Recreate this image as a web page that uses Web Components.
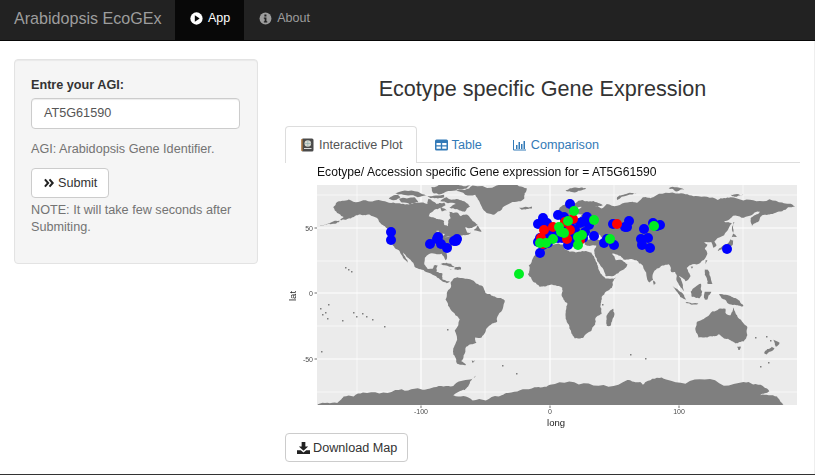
<!DOCTYPE html>
<html>
<head>
<meta charset="utf-8">
<title>Arabidopsis EcoGEx</title>
<style>
  html, body { margin: 0; padding: 0; background: #fff; }
  body { font: 12.650px/20px "Liberation Sans", Arial, sans-serif; color: #333; overflow: hidden; }
</style>
</head>
<body>

<app-navbar brand="Arabidopsis EcoGEx">
  <nav-link active label="App">
    <svg viewBox="0 0 14 14" width="13" height="13"><circle cx="7" cy="7" r="6.6" fill="#fff"/><path d="M5.2 3.6 10.4 7 5.2 10.4Z" fill="#080808"/></svg>
  </nav-link>
  <nav-link label="About">
    <svg viewBox="0 0 14 14" width="13" height="13"><circle cx="7" cy="7" r="6.4" fill="#9d9d9d"/><path d="M5.8 2.8h2.2v2H5.800ZM5.200 6h2.800v4h.9v1.300H5.200V10h.9V7.300h-.9Z" fill="#222"/></svg>
  </nav-link>
</app-navbar>

<app-layout>
  <side-panel slot="side"></side-panel>
  <main-panel slot="main"></main-panel>
</app-layout>

<app-footer></app-footer>

<script>
class AppNavbar extends HTMLElement {
  constructor() {
    super();
    this.attachShadow({ mode: 'open' });
    this.shadowRoot.innerHTML = `
      <style>
        :host { display: flex; height: 40px; background: #222; border-bottom: 1px solid #080808; }
        .brand { width: 148px; padding: 0 13px 0 14px; font-size: 16.100px; line-height: 37px; color: #9d9d9d; white-space: nowrap; }
        .links { display: flex; }
      </style>
      <div class="brand">${this.getAttribute('brand')}</div>
      <div class="links"><slot></slot></div>`;
  }
}
customElements.define('app-navbar', AppNavbar);

class NavLink extends HTMLElement {
  constructor() {
    super();
    this.attachShadow({ mode: 'open' });
    this.shadowRoot.innerHTML = `
      <style>
        :host { display: flex; align-items: center; gap: 5px; height: 36px; padding: 0 15px 4px; color: #9d9d9d; font-size: 12.500px; }
        :host([active]) { background: #080808; color: #fff; padding-right: 14px; }
        ::slotted(svg) { display: block; }
      </style>
      <slot></slot><span>${this.getAttribute('label')}</span>`;
  }
}
customElements.define('nav-link', NavLink);

class AppLayout extends HTMLElement {
  constructor() {
    super();
    this.attachShadow({ mode: 'open' });
    this.shadowRoot.innerHTML = `
      <style>
        :host { display: grid; grid-template-columns: 244px 515px; column-gap: 27px; height: 433px; padding-left: 14px; box-sizing: border-box; border-right: 1px solid #eee; }
        .side { padding-top: 18px; }
      </style>
      <div class="side"><slot name="side"></slot></div>
      <div><slot name="main"></slot></div>`;
  }
}
customElements.define('app-layout', AppLayout);

class SidePanel extends HTMLElement {
  constructor() {
    super();
    this.attachShadow({ mode: 'open' });
    this.shadowRoot.innerHTML = `
      <style>
        :host { display: block; height: 205px; box-sizing: border-box; padding: 15px 17px 15px 16px; background: #f5f5f5; border: 1px solid #e3e3e3; border-radius: 4px; box-shadow: inset 0 1px 1px rgba(0,0,0,.05); }
        label { display: block; font-weight: bold; line-height: 20px; margin-bottom: 3px; }
        .input { box-sizing: border-box; height: 31px; padding: 0 12px; line-height: 29px; background: #fff; border: 1px solid #ccc; border-radius: 4px; color: #555; box-shadow: inset 0 1px 1px rgba(0,0,0,.075); }
        .help { color: #737373; line-height: 17px; }
        .help.top { margin: 12px 0 10px; line-height: 17px; }
        .help.note { margin-top: 4px; }
      </style>
      <label>Entre your AGI:</label>
      <div class="input">AT5G61590</div>
      <div class="help top">AGI: Arabidopsis Gene Identifier.</div>
      <app-button label="Submit">
        <svg viewBox="0 0 12 10" width="11" height="10"><path d="M1 1l3.500 4L1 9M6 1l3.500 4L6 9" fill="none" stroke="#222" stroke-width="2.200"/></svg>
      </app-button>
      <div class="help note">NOTE: It will take few seconds after Submiting.</div>`;
  }
}
customElements.define('side-panel', SidePanel);

class AppButton extends HTMLElement {
  constructor() {
    super();
    this.attachShadow({ mode: 'open' });
    this.shadowRoot.innerHTML = `
      <style>
        :host { display: inline-flex; align-items: center; gap: 3px; box-sizing: border-box; height: 30px; padding: 0 11px 0 12px; background: #fff; border: 1px solid #ccc; border-radius: 4px; color: #333; }
        ::slotted(svg) { display: block; }
      </style>
      <slot></slot><span>${this.getAttribute('label')}</span>`;
  }
}
customElements.define('app-button', AppButton);

class MainPanel extends HTMLElement {
  constructor() {
    super();
    this.attachShadow({ mode: 'open' });
    this.shadowRoot.innerHTML = `
      <style>
        :host { display: block; }
        h2 { margin: 0; padding-top: 34px; height: 51px; font-size: 21.600px; line-height: 28px; font-weight: 500; text-align: center; color: #333; }
        app-button { height: 29px; padding: 0 10px 0 11px; }
      </style>
      <h2>Ecotype specific Gene Expression</h2>
      <tab-bar></tab-bar>
      <map-plot></map-plot>
      <app-button label="Download Map">
        <svg viewBox="0 0 14 14" width="13" height="13"><path d="M5 1h4v5h3L7 10.500 2 6h3Z" fill="#222"/><path d="M0 10h4l3 2.500L10 10h4v4H0Z" fill="#222"/></svg>
      </app-button>`;
  }
}
customElements.define('main-panel', MainPanel);

class TabBar extends HTMLElement {
  constructor() {
    super();
    this.attachShadow({ mode: 'open' });
    this.shadowRoot.innerHTML = `
      <style>
        :host { display: flex; gap: 2px; height: 37px; box-sizing: border-box; border-bottom: 1px solid #ddd; }
        .tab { display: flex; align-items: center; gap: 5px; box-sizing: border-box; height: 37px; padding: 0 12px 1px 15px; color: #337ab7; border: 1px solid transparent; border-bottom: 0; }
        .tab.active { color: #555; background: #fff; border-color: #ddd; border-radius: 4px 4px 0 0; padding-right: 13px; }
        .tab.narrow { gap: 4px; }
        svg { display: block; }
      </style>
      <div class="tab active">
        <svg viewBox="0 0 13 14" width="13" height="14"><rect x="0.500" y="0.500" width="12" height="13" rx="1.500" fill="#4a4a4a"/><path d="M1 1v12" stroke="#c8843c" stroke-width="1.200"/><circle cx="6.800" cy="5.500" r="3.300" fill="#d8d8d0"/><path d="M3.500 5.500h6.600M6.800 2.200v6.600" stroke="#8aa" stroke-width=".6"/><path d="M3 10.500h7.500" stroke="#ddd"/></svg>
        <span>Interactive Plot</span>
      </div>
      <div class="tab narrow">
        <svg viewBox="0 0 13 12" width="13" height="12"><rect width="13" height="11" y="0.500" rx="1.500" fill="#337ab7"/><path d="M1.500 4h4.300v2.300H1.500ZM7.200 4h4.300v2.300H7.200ZM1.500 7.500h4.300v2.300H1.500ZM7.200 7.500h4.300v2.300H7.200Z" fill="#fff"/></svg>
        <span>Table</span>
      </div>
      <div class="tab">
        <svg viewBox="0 0 13 12" width="13" height="12"><path d="M.5 1v10H13" fill="none" stroke="#337ab7"/><path d="M3 6h1.500v4H3ZM5.500 3h1.500v7H5.500ZM8 5h1.500v5H8ZM10.500 2H12v8h-1.500Z" fill="#337ab7"/></svg>
        <span>Comparison</span>
      </div>`;
  }
}
customElements.define('tab-bar', TabBar);

// continents as lon,lat outlines, the svg scales them onto the plot panel
const LAND = [
  // north america
  [-168,65.5,-166,68.5,-161,70.5,-156,71.3,-141,70,-128,70,-115,68,-108,68,-95,68,-94,72,-88,68,-82,69,-81,67,-87,64,-93,61,-94,58.5,-88,56.5,-82,55,-82,52,-79,51,-79,55,-77,57,-78,62,-72,61.5,-69,58.5,-65,60,-60,55,-56,52,-60,50,-66,50,-65,48,-64,46,-61,46,-66,44,-70,43.5,-70,42,-74,40.5,-76,38,-76,35,-81,31.5,-80,26,-81,25,-82.5,28,-84,30,-89,30,-94,29.5,-97,27,-97.5,22,-95,18.5,-91,18.5,-90,21,-87,21,-88,16,-83.5,15,-83.5,10.5,-80,9,-77.5,8.5,-80,7.5,-83,8.500,-86,11,-91,14,-96,16,-105,20,-106,23,-112,29,-114,31,-112,27,-110,23,-112,25,-115,29,-117,32.5,-120.5,34.5,-124,40,-124,48,-128,51,-133,56,-140,60,-148,60,-152,58,-158,56,-165,54.5,-160,58,-165,61],
  // aleutians
  [-178,51.500,-170,52.500,-163,54.500,-164,55,-171,53,-178,52],
  // arctic islands
  [-80,73,-70,71,-62,66,-66,62,-72,64,-78,65,-73,68,-85,70],
  [-117,72,-105,73,-102,69,-115,69],
  [-90,76,-75,78,-62,82,-75,83,-92,81],
  [-125,72,-118,75,-116,73,-120,71],
  [-120,76,-100,76,-95,74,-110,74.500],
  [-95,74,-82,75,-82,73,-92,72.500],
  [-59,48,-53,47,-56,51.5],
  [-84,62.500,-80,63,-81,64,-85,65],
  // greenland, iceland
  [-73,78,-60,82,-30,83.5,-18,80,-20,72,-32,68,-43,60,-50,62,-54,68,-58,75],
  [-24,65,-14,66,-14,64.5,-22,63.5],
  // caribbean
  [-85,22,-80,23,-74,20,-78,20],
  [-74,19.5,-69,19.5,-69,18,-74,18],
  [-78,18.500,-76,18.200,-77,17.800],
  // south america
  [-77,8,-72,12,-62,10.5,-52,5,-50,0,-44,-2.5,-35,-6,-39,-15,-41,-22,-48,-26,-53,-34,-58,-34,-57,-38,-65,-41,-66,-46,-69,-52,-65,-55,-72,-54,-75,-47,-73,-38,-70,-20,-76,-14,-81,-5,-80,0,-77,4],
  [-61,-51.500,-58,-51.500,-59,-52.500],
  // africa
  [-6,35.5,3,37,10,37,11,33.5,20,31,25,32,32,31,34,28,37,21,39,15,43,11,51,12,48,4,40,-3,39,-10,40,-16,35,-20,35,-24,32,-29,26,-34,19,-34.5,15,-27,12,-17,13.5,-8,9,-1,9.5,4,4,6,-4,5,-8,4.5,-13,8.5,-17,14,-16.5,21,-13,27,-9.5,31],
  [49,-12,50,-16,47,-25,44,-25,44,-17],
  // eurasia
  [-9,37,-9,43,-2,43.5,-1,46,-4.5,48,2,51,8,54,8,57,11,55,14,54,21,55,24,59,30,60,22,60,21,64,25,66,22,65.5,17,62,18,60,13,55.5,11,59,5,58.5,5,62,14,68,25,71,31,70,41,67,35,66,40,64.5,44,68,60,69,68,69,72,73,80,73,100,76,113,74,130,71,140,73,160,70,180,69,190,66,180,62.5,170,60,163,58,162,55,156.5,51,155.5,57,163,62,155,59,142,59,135,54.5,141,53,135,44,130,42,127.5,39.5,129,36,126.5,34.5,125,39,121,39,118,39,122,37,120,34,122,30,119,25,113,22,108,21,106,19,109,13,105,9,100,13,103,5,104,1.5,100,6,98,10,97,16,94,16,92,22,87,21,80,15,80,10,77,8,73,18,72,21,67,25,57,25.5,56,27,50,30,48,30,51,25,56,25,60,22,55,17,45,13,43,13,39,21,35,28,34.5,31,36,36,30,36,27,37,26.5,40,31,41,41,41,39,44,37,45,33,45,30,46,28,42,24,40.5,23,37,20,40,19,42,13,45.5,18,40,16,38,12,42,8,44,3,43,0,39,-2,37,-5,36],
  // british isles, north islands
  [-5,50,1,51,0,54,-3,58.5,-6,57,-3,54,-5,52],
  [-10,52,-6,52,-6,55,-9,54.5],
  [12,78,20,80.500,28,80,20,77],
  [52,71,68,76.5,60,76,52,73],
  [92,80,104,79,98,77.500],
  [140,75,150,75,143,73.500],
  // mediterranean islands
  [12.500,38,15.500,38,15,36.700],
  [8.500,41,9.700,41,9.500,39,8.500,39],
  [23.500,35.500,26,35.300,24,35],
  // asia islands
  [130,32,136,34,141,36,142,40,140,41,137,37,131,34],
  [140,42,145,43,142,45.5],
  [142,46,143,54,142,54],
  [120,18,122,18,124,13,126,7,122,7,120,14],
  [109,1,117,7,118,1,116,-4,110,-3],
  [95,5.5,104,-2,106,-6,101,-3],
  [105,-7,115,-8,114,-8.7,106,-7.8],
  [120,1,125,1,122,-5,120,-5],
  [131,-1,141,-3,147,-6,150,-10,143,-9,138,-8,133,-4],
  [80,9.500,82,7.500,80.500,6],
  [120.500,25,122,25,121,22],
  [109,20,111,20,110,18.500],
  // oceania
  [114,-22,122,-18,126,-14,131,-12,136,-12,136,-15,140,-17,142,-11,146,-19,153,-26,153,-32,150,-37,144,-38.5,138,-35,131,-31.5,124,-33,115,-34,113,-26],
  [145,-41,148,-41,147,-43.500,146,-43.500],
  [173,-35,178,-38,175,-41],
  [172,-41,174,-42,168,-47,166,-46],
  // antarctica
  [-180,-85,-165,-84,-160,-79,-145,-76,-120,-74,-100,-73.5,-90,-72,-75,-71,-62,-66,-57,-63,-62,-68,-66,-74,-75,-78,-60,-82,-40,-79,-30,-76,-12,-72,0,-70,30,-69,60,-66.5,70,-68,72,-70,76,-67,90,-66,120,-66,150,-68,165,-71,170,-75,163,-78,176,-79,180,-84,181,-85.500,-180,-85.500]
];

const LAKES = [
  [-88,47.500,-86,47.500,-86,46.800,-88,46.800],
  [-87.200,45,-86.600,45,-86.800,42.500,-87.200,42.500],
  [-83.500,45.500,-81.500,45,-82.500,43.500],
  [-82,42.500,-77,43.600,-79,42.800]
];

const SPECKS = [
  [345,267],[348,269],[351,271],[320,308],[325,312],[327,318],[322,314],[328,304],[353,312],[356,316],[362,313],[366,316],[372,319],[342,320],[384,326],[321,351],[447,329],[472,361],[502,365],[516,373],[630,354],[645,358],[760,366],[768,362],[755,337],[766,336],[770,340],[590,318],[602,304]
];

const BLUE = [
  [391,232],[391,240],[430,244],[438,237],[437,239],[441,244],[447,248],[454,241],[457,239],[456,241],
  [570,204],[558,215],[564,217],[543,218],[542,222],[538,224],[547,223],[545,228],[582,222],[587,217],[589,225],[594,236],[580,223],[567,227],[575,230],[585,232],[572,237],[553,233],[540,238],[538,242],[543,245],[548,243],[568,245],[575,242],[583,238],[540,253],[548,236],[558,238],[562,238],[570,223],
  [613,224],[625,227],[629,221],[627,227],[644,229],[653,223],[660,225],[657,226],[648,238],[641,239],[642,245],[650,248],[607,239],[604,243],[614,245],[727,249]
];
const RED = [[573,219],[565,222],[553,227],[544,230],[570,230],[567,239],[541,238],[543,244],[580,240],[617,224]];
const GREEN = [[574,211],[568,221],[594,220],[559,227],[561,232],[564,233],[553,239],[540,243],[546,243],[578,237],[582,235],[578,245],[610,239],[654,226],[519,274]];

// break up the straight edges so the coasts read as coasts
let seed = 7;
const rnd = () => { seed = (seed * 16807) % 2147483647; return seed / 1073741823.5 - 1; };
function roughen(p) {
  for (let pass = 0; pass < 3; pass++) {
    const out = [];
    for (let i = 0; i < p.length; i += 2) {
      const x = p[i], y = p[i + 1], nx = p[(i + 2) % p.length], ny = p[(i + 3) % p.length];
      out.push(x, y);
      const dx = nx - x, dy = ny - y, len = Math.hypot(dx, dy);
      if (len > 1.500 && len < 60) {
        const k = rnd() * .13;
        out.push(+((x + nx) / 2 - dy * k).toFixed(2), +((y + ny) / 2 + dx * k).toFixed(2));
      }
    }
    p = out;
  }
  return p;
}

class MapPlot extends HTMLElement {
  constructor() {
    super();
    this.attachShadow({ mode: 'open' });
    const poly = (list, fill) => list.map(p => `<polygon fill="${fill}" points="${p.join(' ')}"/>`).join('');
    const dots = (list, fill) => list.map(d => `<circle cx="${d[0]}" cy="${d[1]}" r="5" fill="${fill}"/>`).join('');
    const vline = (x, w) => `<path d="M${x} 185V405" stroke="#fff" stroke-width="${w}"/>`;
    const hline = (y, w) => `<path d="M317 ${y}H797" stroke="#fff" stroke-width="${w}"/>`;
    const tick = (x, y, l) => `<path d="M${x} 405.500v2.500" stroke="#333" stroke-width=".7"/><text x="${x}" y="414" text-anchor="middle">${l}</text>`;
    const ytick = (y, l) => `<path d="M314.500 ${y}h2.500" stroke="#333" stroke-width=".7"/><text x="313" y="${y + 2.500}" text-anchor="end">${l}</text>`;
    this.shadowRoot.innerHTML = `
      <style>
        :host { display: block; height: 270px; }
        svg { display: block; font-family: "Liberation Sans", Arial, sans-serif; }
        .art { filter: blur(.45px); }
        .title { filter: blur(.2px); }
        .ticks { filter: blur(.25px); }
        .ticks text { font-size: 7px; fill: #4d4d4d; }
      </style>
      <svg viewBox="285 163 515 270" width="515" height="270">
        <defs><clipPath id="panel"><rect x="317" y="185" width="480" height="220"/></clipPath></defs>
        <text class="title" x="317" y="176" font-size="12.150" fill="#111">Ecotype/ Accession specific Gene expression for = AT5G61590</text>
        <g class="art">
          <rect x="317" y="185" width="480" height="220" fill="#ebebeb"/>
          ${[357, 485, 614, 743].map(x => vline(x, .6)).join('')}
          ${[421, 550, 679].map(x => vline(x, 1.200)).join('')}
          ${[195, 261, 326, 392].map(y => hline(y, .6)).join('')}
          ${[228, 293, 359].map(y => hline(y, 1.200)).join('')}
          <g clip-path="url(#panel)">
            <g transform="translate(550 293) scale(1.29 -1.31)">
              ${poly(LAND.map(roughen), '#7f7f7f')}
              ${poly(LAKES, '#ebebeb')}
            </g>
          </g>
          ${SPECKS.map(s => `<rect x="${s[0]}" y="${s[1]}" width="1.500" height="1.500" fill="#7f7f7f"/>`).join('')}
          ${dots(BLUE, '#0000ff')}
          ${dots(RED, '#ff0000')}
          ${dots(GREEN, '#00ee22')}
        </g>
        <g class="ticks">
          ${tick(421, 405, '-100')}${tick(550, 405, '0')}${tick(679, 405, '100')}
          ${ytick(228, '50')}${ytick(293, '0')}${ytick(359, '-50')}
          <text x="556" y="426" text-anchor="middle" style="font-size:9.500px;fill:#222">long</text>
          <text transform="translate(296 296) rotate(-90)" text-anchor="middle" style="font-size:9.500px;fill:#222">lat</text>
        </g>
      </svg>`;
  }
}
customElements.define('map-plot', MapPlot);

class AppFooter extends HTMLElement {
  constructor() {
    super();
    this.attachShadow({ mode: 'open' });
    this.shadowRoot.innerHTML = `<style>:host { display: block; height: 1px; background: #333; }</style>`;
  }
}
customElements.define('app-footer', AppFooter);
</script>
</body>
</html>
